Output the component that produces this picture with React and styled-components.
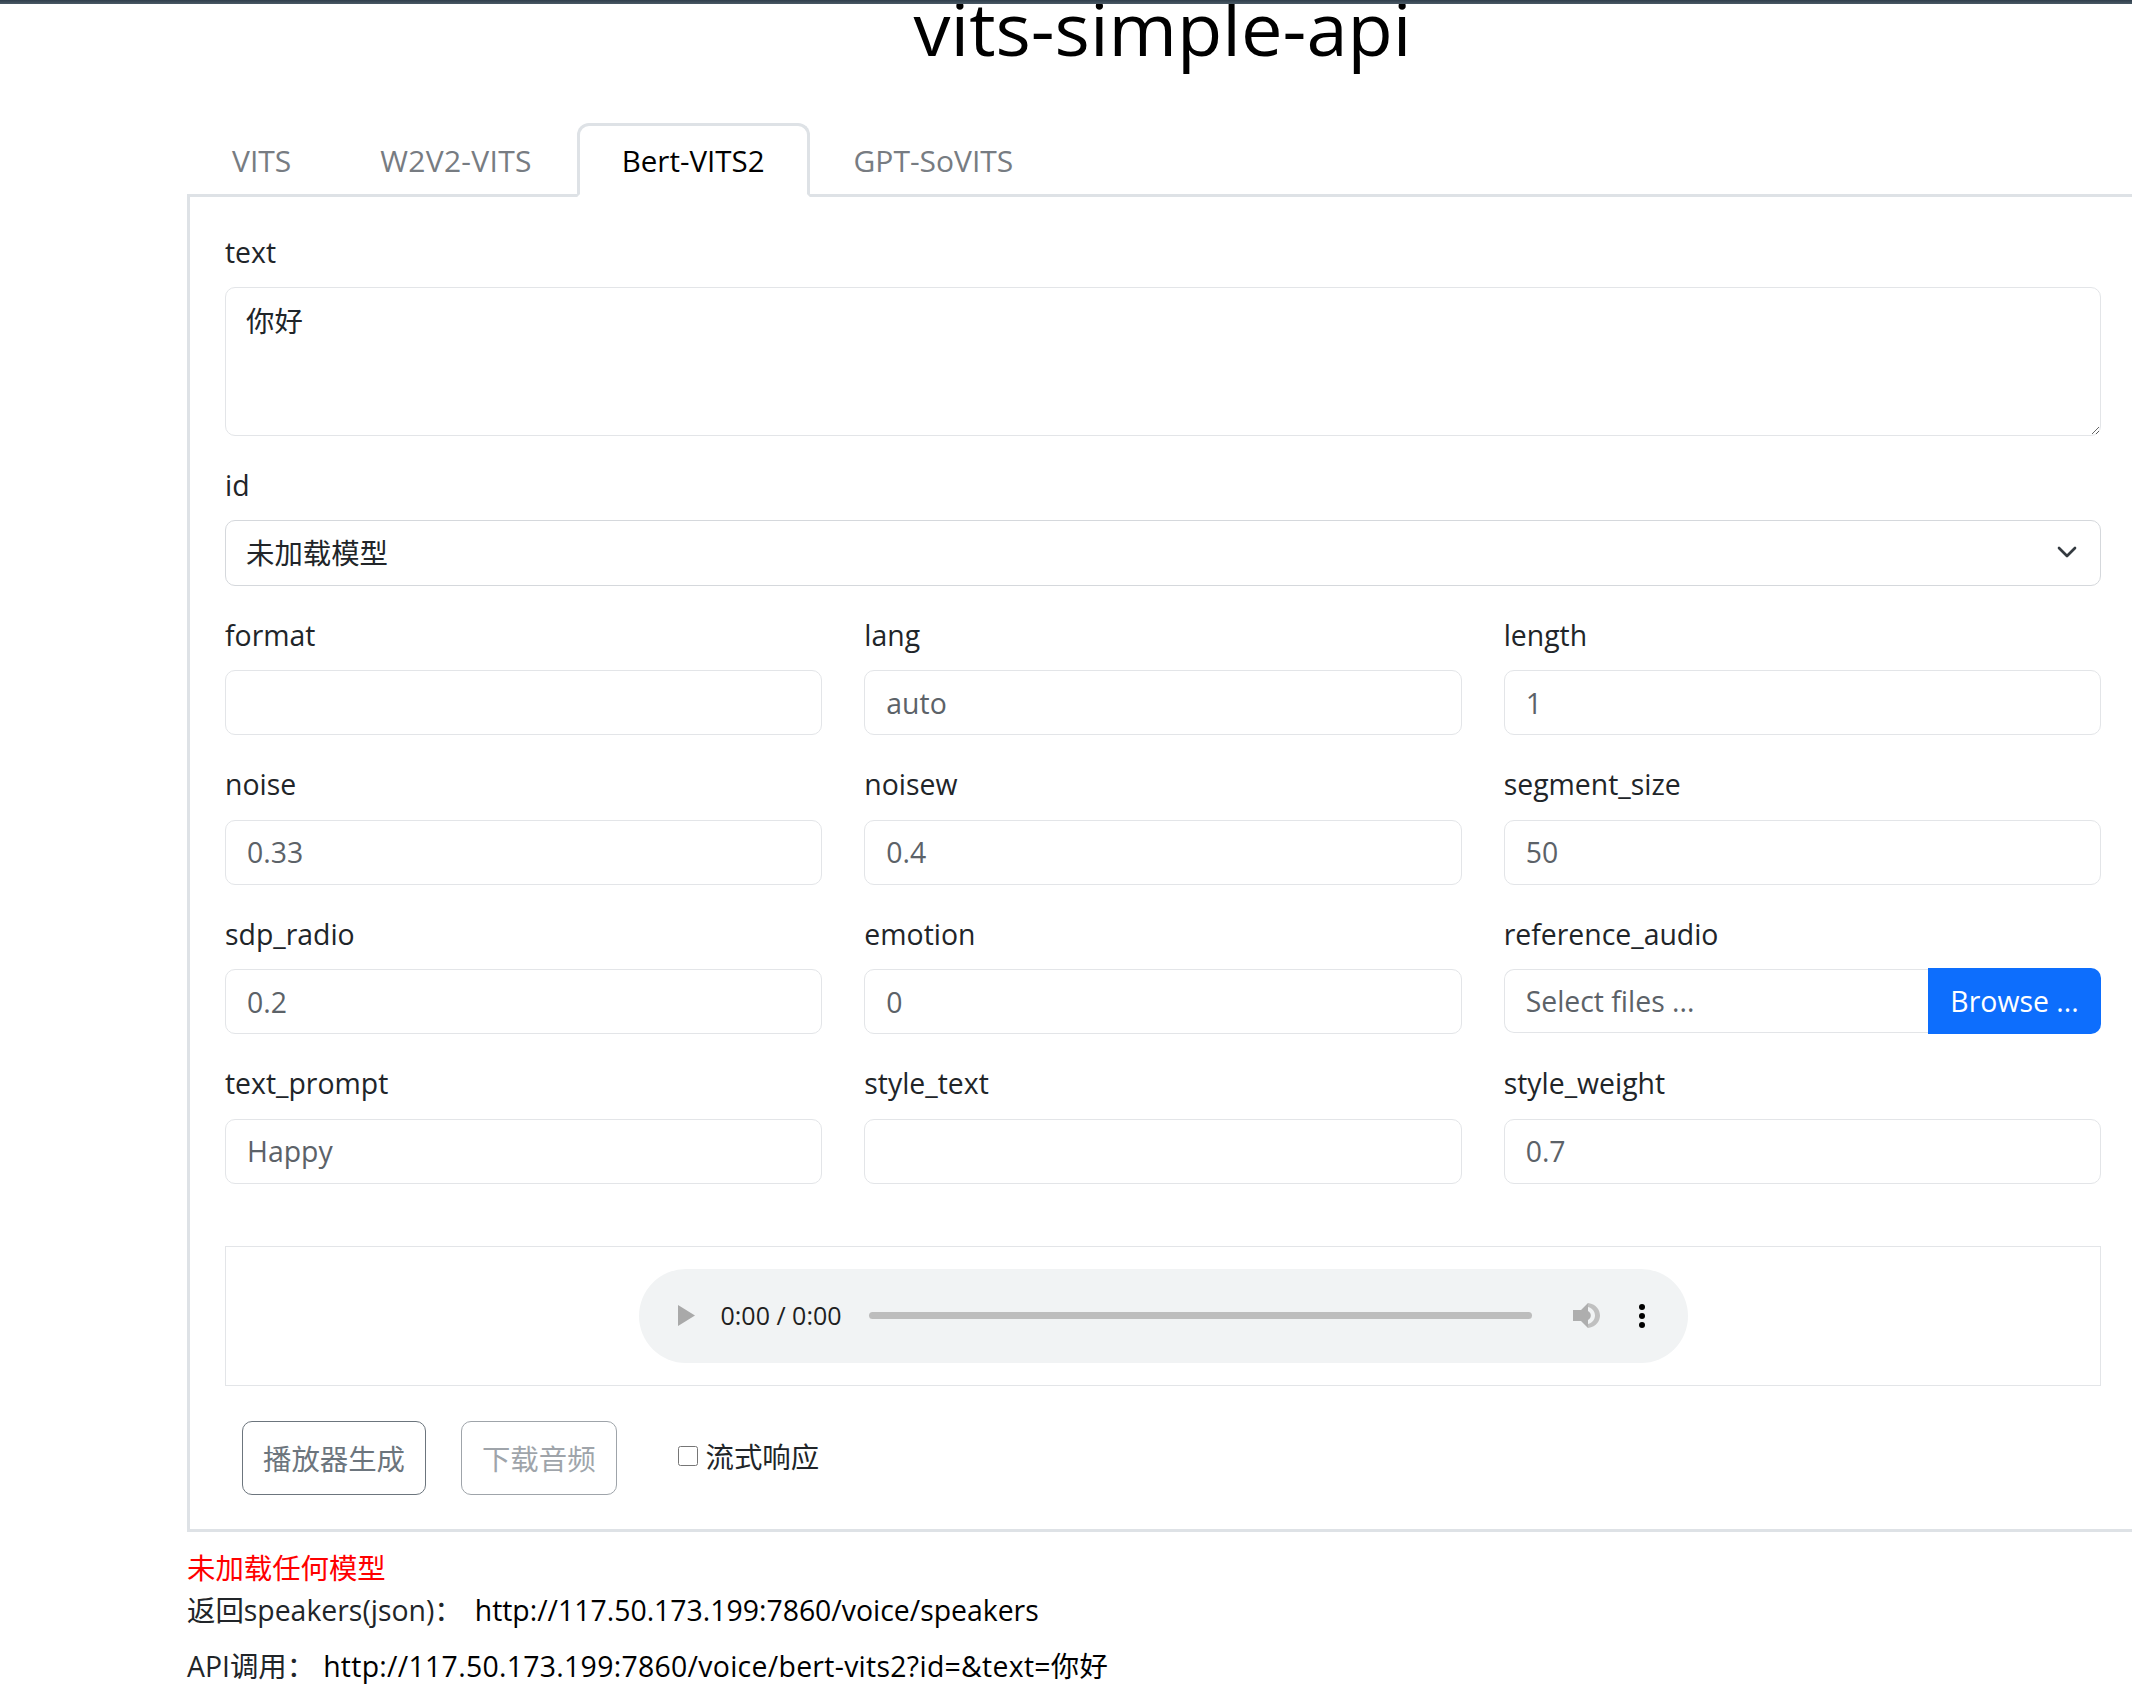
import styled, { createGlobalStyle } from "styled-components"
import { ChevronDown } from "lucide-react"

const GlobalStyle = createGlobalStyle`
    html, body {
        margin: 0;
        padding: 0;
        background: #ffffff;
        overflow-x: hidden;
    }
    body {
        font-family: "Open Sans", "Noto Sans CJK SC", sans-serif;
        font-size: 28.4px;
        line-height: 40.8px;
        color: #212529;
    }
    * {
        box-sizing: border-box;
    }
`

const TopBar = styled.div`
    position: relative;
    z-index: 2;
    height: 4px;
    background: linear-gradient(#2f3e4b, #4a5a66);
`

const Page = styled.div`
    padding-left: 187px;
    width: 2139px;
`

const Title = styled.h1`
    margin: -18px 0 0;
    height: 137px;
    padding-right: 1px;
    font-size: 74px;
    font-weight: 400;
    line-height: 84px;
    color: #000000;
    text-align: center;
`

const TabBar = styled.div`
    display: flex;
    height: 74px;
    padding-left: 1px;
    border-bottom: 3px solid #dee2e6;
`

const Tab = styled.div`
    height: 74px;
    padding: 0 42px 0 ${props => (props.$active ? "42px" : "41px")};
    border: 3px solid ${props => (props.$active ? "#dee2e6" : "transparent")};
    border-bottom-color: ${props => (props.$active ? "#ffffff" : "transparent")};
    border-radius: 12px 12px 0 0;
    font-size: ${props => (props.$active ? "29.5px" : "30px")};
    letter-spacing: ${props => (props.$spaced ? "0.3px" : "0")};
    line-height: 70px;
    color: ${props => (props.$active ? "#000000" : "#777c82")};
`

const Panel = styled.div`
    padding: 36px 35px 34px;
    border-left: 3px solid #dee2e6;
    border-right: 3px solid #dee2e6;
    border-bottom: 3px solid #dee2e6;
`

const Field = styled.div`
    margin-bottom: 30px;
`

const Label = styled.label`
    display: block;
    height: 40.8px;
    margin-bottom: 13.6px;
    line-height: 38px;
    color: #212529;
`

const Grid = styled.div`
    display: grid;
    grid-template-columns: repeat(3, 1fr);
    column-gap: 42px;
`

const TextArea = styled.textarea`
    display: block;
    width: 100%;
    height: 148.6px;
    padding: 13px 20px;
    border: 1.7px solid #e3e5e8;
    border-radius: 10px;
    outline: none;
    resize: vertical;
    font-family: inherit;
    font-size: 28.4px;
    line-height: 40.8px;
    color: #212529;
`

const SelectWrap = styled.div`
    position: relative;
    svg {
        position: absolute;
        top: 16px;
        right: 18px;
        color: #343a40;
        pointer-events: none;
    }
`

const Select = styled.select`
    display: block;
    width: 100%;
    height: 65.6px;
    padding: 0 20px;
    border: 1.7px solid #d5d8dc;
    border-radius: 10px;
    outline: none;
    appearance: none;
    background: #ffffff;
    font-family: inherit;
    font-size: 28.4px;
    color: #212529;
`

const Input = styled.input`
    display: block;
    width: 100%;
    height: 65px;
    padding: 0 21px;
    border: 1.7px solid #e3e5e8;
    border-radius: 10px;
    outline: none;
    font-family: inherit;
    font-size: 28.4px;
    color: #212529;
    &::placeholder {
        color: #5c6268;
        opacity: 1;
    }
`

const FileGroup = styled.div`
    display: flex;
    align-items: center;
    height: 66px;
    margin-top: -1px;
`

const FileInput = styled(Input)`
    flex: 1;
    min-width: 0;
    height: 64.6px;
    border-right: none;
    border-radius: 10px 0 0 10px;
`

const BrowseButton = styled.button`
    width: 173px;
    height: 66px;
    padding: 0;
    border: none;
    border-radius: 0 10px 10px 0;
    background: #0d6efd;
    font-family: inherit;
    font-size: 28.4px;
    color: #ffffff;
`

const AudioBox = styled.div`
    display: flex;
    justify-content: center;
    margin-top: 32px;
    padding: 22px 0;
    border: 1.7px solid #e3e5e8;
`

const Player = styled.div`
    display: flex;
    align-items: center;
    width: 1049px;
    height: 94px;
    padding-left: 39px;
    border-radius: 47px;
    background: #f1f3f4;
`

const TimeText = styled.span`
    width: 120px;
    margin-left: 26px;
    font-size: 25px;
    white-space: nowrap;
    color: #1f1f1f;
`

const Progress = styled.div`
    width: 663px;
    height: 7px;
    margin-left: 28px;
    margin-right: 41px;
    border-radius: 4px;
    background: #bdbdbd;
`

const Dots = styled.svg`
    margin-left: 39px;
`

const Actions = styled.div`
    display: flex;
    align-items: flex-start;
    margin-top: 35px;
    padding-left: 17px;
`

const ActionButton = styled.button`
    height: 74px;
    margin-right: 35px;
    padding: 0 20px;
    border: 1.7px solid #6c757d;
    border-radius: 10px;
    background: #ffffff;
    font-family: inherit;
    font-size: 28.4px;
    color: #6c757d;
    opacity: ${props => (props.$disabled ? 0.65 : 1)};
`

const StreamLabel = styled.label`
    display: flex;
    align-items: center;
    height: 74px;
    margin-left: 26px;
    font-size: 28.4px;
    color: #212529;
`

const Check = styled.input`
    width: 20px;
    height: 20px;
    margin: -3px 8px 0 0;
`

const Footer = styled.div`
    margin-top: 16px;
`

const Warning = styled.div`
    color: #ff0000;
`

const InfoLine = styled.p`
    margin: 2px 0 15px;
    color: #212529;
`

const Link = styled.a`
    margin-left: ${props => (props.$spaced ? "8px" : "12px")};
    letter-spacing: ${props => (props.$spaced ? "0.3px" : "0")};
    color: #000000;
    text-decoration: none;
`

const fields = [
    ["format", ""], ["lang", "auto"], ["length", "1"],
    ["noise", "0.33"], ["noisew", "0.4"], ["segment_size", "50"],
    ["sdp_radio", "0.2"], ["emotion", "0"], ["reference_audio", null],
    ["text_prompt", "Happy"], ["style_text", ""], ["style_weight", "0.7"],
]

export default function App() {
    return (
        <>
            <GlobalStyle />
            <TopBar />
            <Page>
                <Title>vits-simple-api</Title>
                <TabBar>
                    <Tab>VITS</Tab>
                    <Tab $spaced>W2V2-VITS</Tab>
                    <Tab $active>Bert-VITS2</Tab>
                    <Tab>GPT-SoVITS</Tab>
                </TabBar>
                <Panel>
                    <Field>
                        <Label>text</Label>
                        <TextArea readOnly defaultValue="你好" />
                    </Field>
                    <Field>
                        <Label>id</Label>
                        <SelectWrap>
                            <Select>
                                <option>未加载模型</option>
                            </Select>
                            <ChevronDown size={32} strokeWidth={2} />
                        </SelectWrap>
                    </Field>
                    <Grid>
                        {fields.map(([name, hint]) => (
                            <Field key={name}>
                                <Label>{name}</Label>
                                {hint === null ? (
                                    <FileGroup>
                                        <FileInput placeholder="Select files ..." readOnly />
                                        <BrowseButton>Browse ...</BrowseButton>
                                    </FileGroup>
                                ) : (
                                    <Input placeholder={hint} readOnly />
                                )}
                            </Field>
                        ))}
                    </Grid>
                    <AudioBox>
                        <Player>
                            <svg width="17" height="21" viewBox="0 0 17 21">
                                <path d="M0 0 L17 10.5 L0 21 Z" fill="#a9a9a9" />
                            </svg>
                            <TimeText>0:00 / 0:00</TimeText>
                            <Progress />
                            <svg width="27" height="25" viewBox="0 0 27 25">
                                <path d="M0 7 H8 L15 0 V25 L8 18 H0 Z" fill="#aeaeae" />
                                <path d="M15 8 C17 9 17.8 11 17.8 12.5 C17.8 14 17 16 15 17 Z" fill="#aeaeae" />
                                <path d="M15 0 C24 1 27 8 27 12.5 C27 17 24 24 15 25 V21 C19.5 20 22 16 22 12.5 C22 9 19.5 5 15 4 Z" fill="#c0c0c0" />
                            </svg>
                            <Dots width="6" height="24" viewBox="0 0 6 24">
                                <circle cx="3" cy="3" r="3" fill="#000000" />
                                <circle cx="3" cy="12" r="3" fill="#000000" />
                                <circle cx="3" cy="21" r="3" fill="#000000" />
                            </Dots>
                        </Player>
                    </AudioBox>
                    <Actions>
                        <ActionButton>播放器生成</ActionButton>
                        <ActionButton $disabled>下载音频</ActionButton>
                        <StreamLabel>
                            <Check type="checkbox" />
                            流式响应
                        </StreamLabel>
                    </Actions>
                </Panel>
                <Footer>
                    <Warning>未加载任何模型</Warning>
                    <InfoLine>
                        返回speakers(json)：
                        <Link href="#">http://117.50.173.199:7860/voice/speakers</Link>
                    </InfoLine>
                    <InfoLine>
                        API调用：
                        <Link href="#" $spaced>http://117.50.173.199:7860/voice/bert-vits2?id=&amp;text=你好</Link>
                    </InfoLine>
                </Footer>
            </Page>
        </>
    )
}
